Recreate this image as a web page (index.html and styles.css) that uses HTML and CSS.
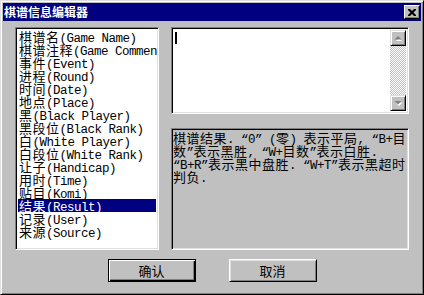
FILE: index.html
```html
<!DOCTYPE html>
<html lang="zh-CN">

<head>
    <meta charset="UTF-8">
    <title>棋谱信息编辑器</title>
    <link rel="stylesheet" href="styles.css">
</head>

<body>
    <div class="window">
        <div class="titlebar">
            <span class="title">棋谱信息编辑器</span>
            <button class="close" aria-label="关闭">
                <svg width="8" height="7" viewBox="0 0 8 7">
                    <path d="M0 0h2l2 2l2-2h2v1l-2.5 2.5l2.5 2.5v1h-2l-2-2l-2 2h-2v-1l2.5-2.5l-2.5-2.5z" fill="#000"/>
                </svg>
            </button>
        </div>

        <div class="body">
            <div class="main">
                <!-- field list -->
                <ul class="fields">
                    <li>棋谱名<span class="en">(Game Name)</span></li>
                    <li>棋谱注释<span class="en">(Game Comment)</span></li>
                    <li>事件<span class="en">(Event)</span></li>
                    <li>进程<span class="en">(Round)</span></li>
                    <li>时间<span class="en">(Date)</span></li>
                    <li>地点<span class="en">(Place)</span></li>
                    <li>黑<span class="en">(Black Player)</span></li>
                    <li>黑段位<span class="en">(Black Rank)</span></li>
                    <li>白<span class="en">(White Player)</span></li>
                    <li>白段位<span class="en">(White Rank)</span></li>
                    <li>让子<span class="en">(Handicap)</span></li>
                    <li>用时<span class="en">(Time)</span></li>
                    <li>贴目<span class="en">(Komi)</span></li>
                    <li class="selected">结果<span class="en">(Result)</span></li>
                    <li>记录<span class="en">(User)</span></li>
                    <li>来源<span class="en">(Source)</span></li>
                </ul>

                <div class="side">
                    <!-- value editor -->
                    <div class="editor">
                        <div class="edit-area">
                            <div class="caret"></div>
                        </div>
                        <div class="scrollbar">
                            <div class="sb-btn">
                                <svg width="8" height="5" viewBox="0 0 8 5">
                                    <path d="M4 1l3 3h-6z" fill="#fff" transform="translate(1 1)"/>
                                    <path d="M4 0l3.5 3.5h-7z" fill="#808080"/>
                                </svg>
                            </div>
                            <div class="sb-track"></div>
                            <div class="sb-btn">
                                <svg width="8" height="5" viewBox="0 0 8 5">
                                    <path d="M0.5 0.5h7l-3.5 3.5z" fill="#fff" transform="translate(1 1)"/>
                                    <path d="M0.5 0h7l-3.5 3.5z" fill="#808080"/>
                                </svg>
                            </div>
                        </div>
                    </div>

                    <!-- field description -->
                    <div class="hint">棋谱结果<span class="en">. “0” (</span>零<span class="en">) </span>表示平局<span class="en">, “B+</span>目<br>数<span class="en">”</span>表示黑胜<span class="en">, “W+</span>目数<span class="en">”</span>表示白胜<span class="en">.</span><br><span class="en">“B+R”</span>表示黑中盘胜<span class="en">. “W+T”</span>表示黑超时<br>判负<span class="en">.</span></div>
                </div>
            </div>

            <div class="actions">
                <button class="btn default">确认</button>
                <button class="btn">取消</button>
            </div>
        </div>
    </div>
</body>

</html>
```

FILE: styles.css
```css
body {
    margin: 0;
    background: #c0c0c0;
    font-family: "Noto Sans CJK SC", sans-serif;
}

.window {
    width: 424px;
    height: 295px;
    box-sizing: border-box;
    padding: 2px;
    background: #c0c0c0;
    border: 1px solid;
    border-color: #dfdfdf #000 #000 #dfdfdf;
    box-shadow: inset 1px 1px #fff, inset -1px -1px #808080;
    display: flex;
    flex-direction: column;
}

.titlebar {
    height: 18px;
    background: #000080;
    color: #fff;
    display: flex;
    align-items: center;
    justify-content: space-between;
    padding-left: 1px;
}

.title {
    font-size: 12px;
    font-weight: bold;
    line-height: 14px;
}

.close {
    width: 16px;
    height: 14px;
    margin-right: 1px;
    padding: 0;
    background: #c0c0c0;
    border: 1px solid;
    border-color: #fff #000 #000 #fff;
    box-shadow: inset -1px -1px #808080;
    display: flex;
    align-items: center;
    justify-content: center;
}

.body {
    flex: 1;
    padding: 6px 0 0 12px;
}

.main {
    display: flex;
    gap: 12px;
    height: 223px;
}

/* sunken field look */
.fields,
.editor,
.hint {
    box-sizing: border-box;
    border: 1px solid;
    border-color: #808080 #fff #fff #808080;
    box-shadow: inset 1px 1px #000, inset -1px -1px #dfdfdf;
}

.fields {
    width: 144px;
    margin: 0;
    padding: 2px;
    list-style: none;
    background: #fff;
    overflow: hidden;
}

/* full-width hanzi, half-width latin, like the old bitmap font */
.fields li,
.hint {
    font-family: "Noto Sans CJK SC", sans-serif;
    font-size: 13px;
    letter-spacing: 0.5px;
    line-height: 13px;
    color: #000;
}

.en {
    font-family: "Liberation Mono", monospace;
    font-size: 12.5px;
    letter-spacing: -0.5px;
    line-height: 0;
}

.fields li {
    height: 13px;
    padding-left: 1px;
    white-space: nowrap;
}

.fields li.selected {
    background: #000080;
    color: #fff;
}

.side {
    width: 238px;
    display: flex;
    flex-direction: column;
    gap: 14px;
}

.editor {
    height: 87px;
    padding: 2px;
    background: #fff;
    display: flex;
}

.edit-area {
    flex: 1;
}

.caret {
    width: 2px;
    height: 12px;
    margin: 2px 0 0 1px;
    background: #000;
}

.scrollbar {
    width: 16px;
    display: flex;
    flex-direction: column;
}

.sb-btn {
    height: 16px;
    box-sizing: border-box;
    background: #c0c0c0;
    border: 1px solid;
    border-color: #dfdfdf #000 #000 #dfdfdf;
    box-shadow: inset 1px 1px #fff, inset -1px -1px #808080;
    display: flex;
    align-items: center;
    justify-content: center;
}

.sb-track {
    flex: 1;
    background: repeating-conic-gradient(#c0c0c0 0 25%, #fff 0 50%) 0 0 / 2px 2px;
}

.hint {
    flex: 1;
    padding: 2px 0 0 1px;
    background: #c0c0c0;
    white-space: pre;
    overflow: hidden;
}

.actions {
    display: flex;
    justify-content: center;
    gap: 33px;
    margin-top: 9px;
    padding-right: 12px;
}

.btn {
    width: 88px;
    height: 23px;
    padding: 0;
    font-family: "Noto Sans CJK SC", sans-serif;
    font-size: 13px;
    color: #000;
    background: #c0c0c0;
    border: 1px solid;
    border-color: #fff #000 #000 #fff;
    box-shadow: inset 1px 1px #dfdfdf, inset -1px -1px #808080;
}

.btn.default {
    border-color: #000;
    box-shadow: inset 1px 1px #fff, inset -1px -1px #000, inset -2px -2px #808080;
}
```
